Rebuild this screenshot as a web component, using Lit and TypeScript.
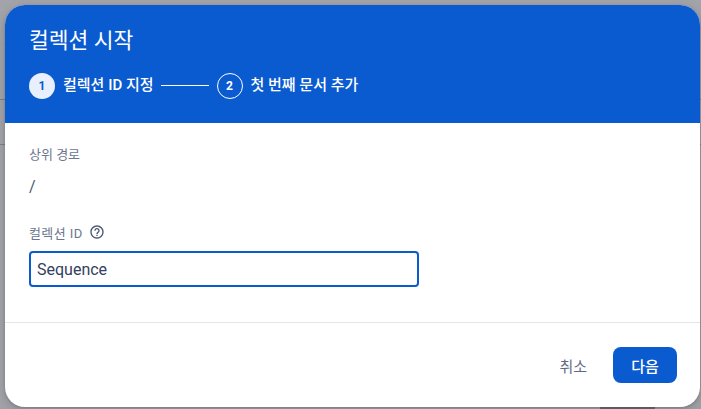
import { LitElement, html, css } from 'lit';
import { customElement } from 'lit/decorators.js';

@customElement('app-root')
export class AppRoot extends LitElement {
  static styles = css`
    :host {
      display: block;
      width: 701px;
      height: 409px;
      overflow: hidden;
      font-family: Roboto, 'Noto Sans CJK KR', sans-serif;
    }

    /* dimmed page behind the dialog, with its divider lines still showing */
    .backdrop {
      box-sizing: border-box;
      height: 409px;
      padding: 5px 1px 2px 5px;
      background:
        linear-gradient(#a0a1a6, #a0a1a6) 0 43px / 100% 1px no-repeat,
        linear-gradient(#7c7f85, #7c7f85) 0 99px / 100% 1px no-repeat,
        linear-gradient(#7c7f85, #7c7f85) 0 144px / 100% 1px no-repeat,
        linear-gradient(#66696e, #66696e) 600px 407px / 55px 2px no-repeat,
        #a3a4a9;
    }

    .dialog {
      display: flex;
      flex-direction: column;
      height: 402px;
      background: #fff;
      border-radius: 20px;
      overflow: hidden;
      box-shadow:
        0 1px 3px rgba(60, 64, 67, 0.3),
        0 4px 8px 3px rgba(60, 64, 67, 0.15);
    }

    /* header */
    .header {
      height: 118px;
      box-sizing: border-box;
      padding: 22px 24px 0;
      background: #0b5bd0;
      color: #fff;
    }

    .title {
      font-size: 21.5px;
      line-height: 28px;
      font-weight: 400;
    }

    .stepper {
      display: flex;
      align-items: center;
      margin-top: 18px;
      font-size: 15px;
      font-weight: 500;
    }

    .dot {
      width: 26px;
      height: 26px;
      box-sizing: border-box;
      border-radius: 50%;
      display: flex;
      align-items: center;
      justify-content: center;
      font-size: 12px;
      font-weight: 700;
    }

    .dot.active {
      background: #e8f0fe;
      color: #0b5bd0;
    }

    .dot.next {
      border: 1px solid #fff;
    }

    .step-label {
      margin-left: 8px;
      position: relative;
      top: -3px;
    }

    .line {
      width: 48px;
      height: 1px;
      margin: 0 8px 0 7px;
      background: #fff;
      position: relative;
      top: -1px;
    }

    /* form */
    .body {
      flex: 1;
      padding: 22px 24px 0;
      border-bottom: 1px solid #e3e5ea;
    }

    .label {
      display: flex;
      align-items: center;
      gap: 6px;
      height: 16px;
      font-size: 13px;
      color: #6b7690;
    }

    .path {
      margin-top: 16px;
      height: 20px;
      font-size: 16px;
      line-height: 20px;
      color: #4a5673;
    }

    .label.id {
      margin-top: 27px;
      letter-spacing: 0.4px;
    }

    .input {
      box-sizing: border-box;
      width: 390px;
      height: 36px;
      margin-top: 11px;
      padding: 0 6px;
      display: flex;
      align-items: center;
      border: 2px solid #0b5bd0;
      border-radius: 4px;
      font-size: 16px;
      color: #33405e;
    }

    /* footer */
    .footer {
      display: flex;
      align-items: center;
      justify-content: flex-end;
      height: 84px;
      padding-right: 23px;
    }

    .btn {
      display: flex;
      align-items: center;
      justify-content: center;
      height: 36px;
      font-size: 15px;
      border-radius: 8px;
    }

    .btn.cancel {
      color: #5f6b85;
      margin-right: 26px;
    }

    .btn.primary {
      width: 64px;
      background: #0b5bd0;
      color: #fff;
      font-weight: 500;
    }
  `;

  render() {
    return html`
      <div class="backdrop">
        <div class="dialog">
          <div class="header">
            <div class="title">컬렉션 시작</div>
            <div class="stepper">
              <span class="dot active">1</span>
              <span class="step-label">컬렉션 ID 지정</span>
              <span class="line"></span>
              <span class="dot next">2</span>
              <span class="step-label">첫 번째 문서 추가</span>
            </div>
          </div>
          <div class="body">
            <div class="label">상위 경로</div>
            <div class="path">/</div>
            <div class="label id">
              컬렉션 ID
              <svg width="16" height="16" viewBox="0 0 24 24" fill="#4a5673">
                <path d="M11 18h2v-2h-2v2zm1-16C6.48 2 2 6.48 2 12s4.48 10 10 10 10-4.48 10-10S17.52 2 12 2zm0 18c-4.41 0-8-3.59-8-8s3.59-8 8-8 8 3.59 8 8-3.59 8-8 8zm0-14c-2.21 0-4 1.79-4 4h2c0-1.1.9-2 2-2s2 .9 2 2c0 2-3 1.75-3 5h2c0-2.25 3-2.5 3-5 0-2.21-1.79-4-4-4z"/>
              </svg>
            </div>
            <div class="input">Sequence</div>
          </div>
          <div class="footer">
            <span class="btn cancel">취소</span>
            <span class="btn primary">다음</span>
          </div>
        </div>
      </div>
    `;
  }
}
